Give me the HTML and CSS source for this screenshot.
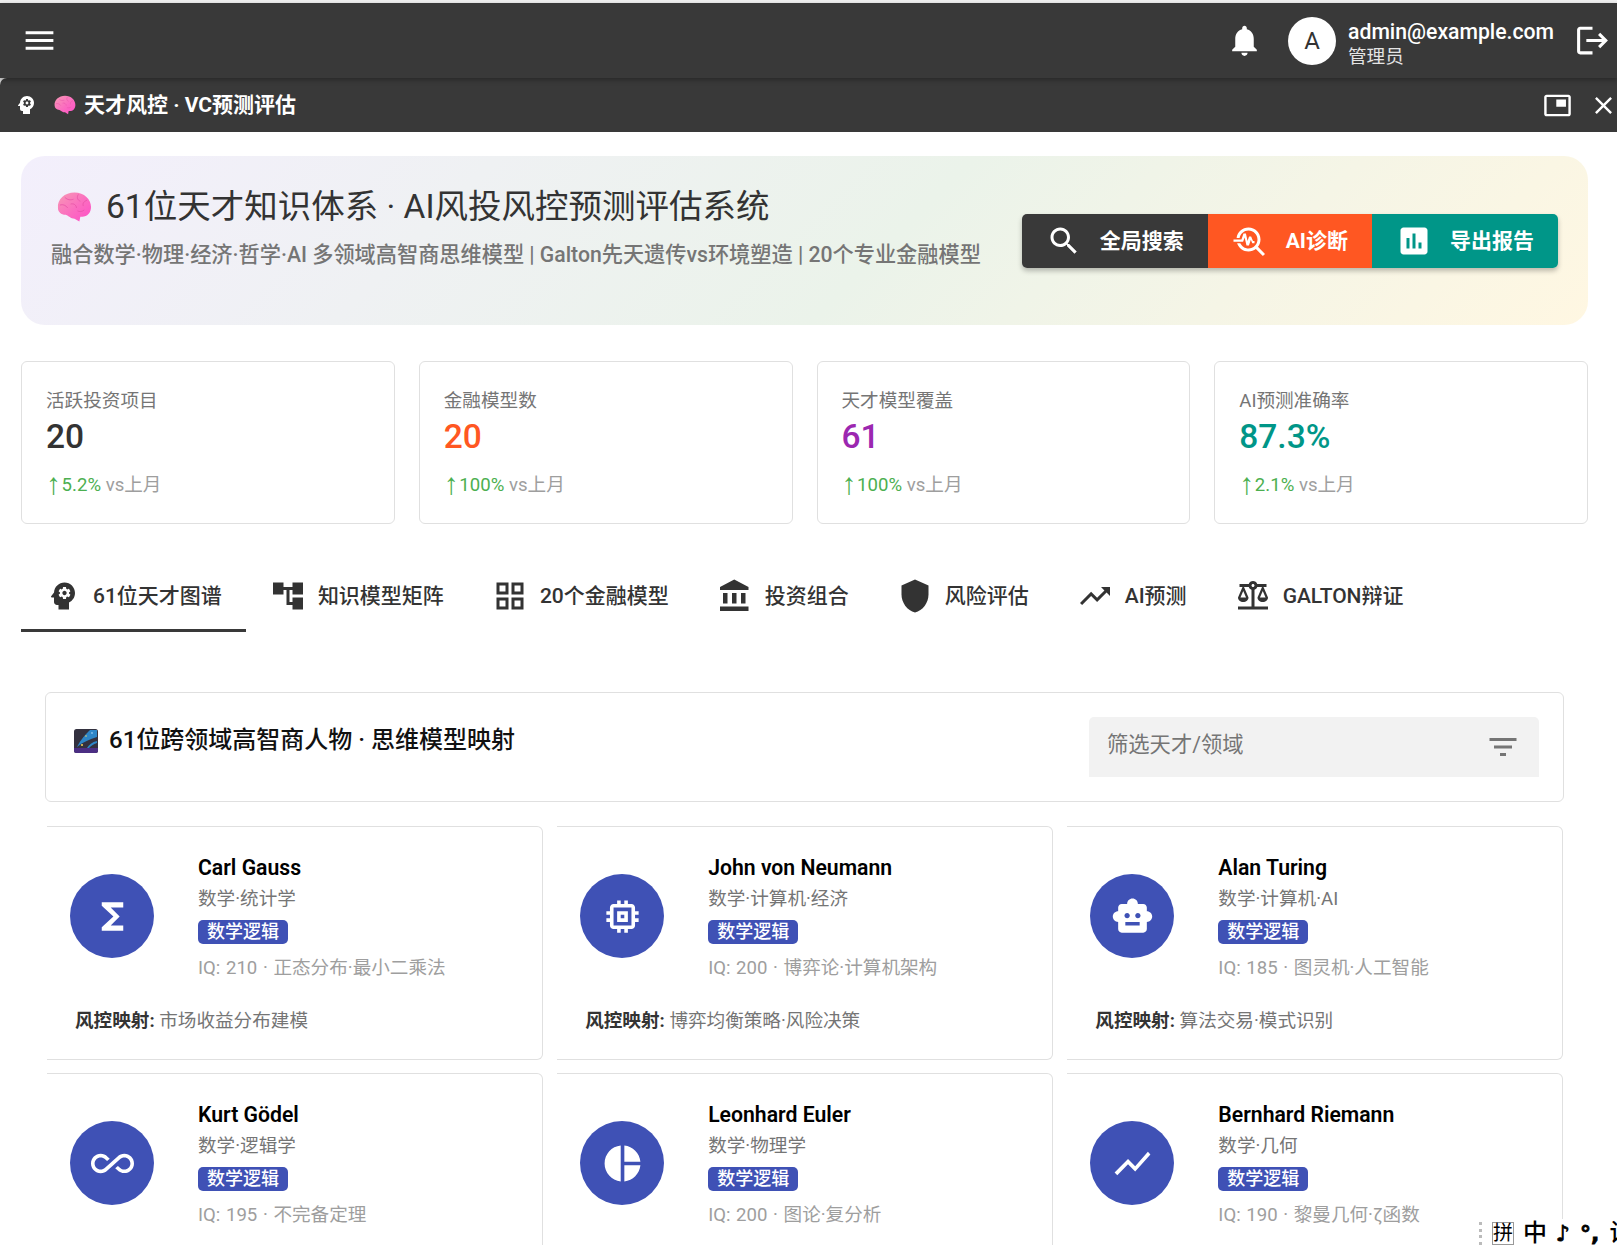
FILE: index.html
```html
<!DOCTYPE html>
<html lang="zh-CN">
<head>
    <meta charset="UTF-8">
    <meta name="viewport" content="width=device-width, initial-scale=1.0">
    <title>天才风控 · VC预测评估</title>
    <link rel="stylesheet" href="styles.css">
</head>
<body>
    <svg class="defs" aria-hidden="true">
        <defs>
            <linearGradient id="brain-fill" x1="0" y1="0" x2="1" y2="1">
                <stop offset="0" stop-color="#f79ab4"/>
                <stop offset=".55" stop-color="#fb6cc0"/>
                <stop offset="1" stop-color="#ff4fc8"/>
            </linearGradient>
        </defs>
        <symbol id="i-brain" viewBox="0 0 36 32">
            <path fill="url(#brain-fill)" d="M1 17C0 8 8 1 18 1c10 0 17 7 17 15 0 6-4 10-9 10h-2l-1 5-5-3c-4 0-6-3-9-4-5 0-8-3-8-7z"/>
            <path fill="none" stroke="#e652a8" stroke-width=".8" d="M8 6c3 3 6 3 9 2M22 3c-2 3-1 6 2 7M31 9c-3 1-5 3-4 6M3 14c3-1 6 0 8 3M14 13c3-1 6 1 6 4M28 19c-2 2-5 2-7 1"/>
        </symbol>
        <symbol id="i-galaxy" viewBox="0 0 24 24">
            <rect x="0" y="0" width="24" height="24" rx="2.5" fill="#33313f"/>
            <path fill="#4b2e83" d="M0 19h24v2.500a2.500 2.500 0 0 1-2.500 2.500h-19A2.500 2.500 0 0 1 0 21.500z"/>
            <path fill="#2d86c8" d="M3 18C7 10 12 5 16 1h7v7c-7 2-14 5-20 10z"/>
            <path fill="#2d86c8" d="M13 19c2-3 5-6 10-7v2c-4 1-6 3-8 5z"/>
            <circle cx="8" cy="16" r="1" fill="#f4d35e"/>
            <circle cx="12" cy="7" r=".8" fill="#f4d35e"/>
            <circle cx="18" cy="4" r=".8" fill="#bfe3ff"/>
        </symbol>
        <symbol id="i-menu" viewBox="0 0 24 24"><path d="M3 18h18v-2H3v2zm0-5h18v-2H3v2zm0-7v2h18V6H3z"/></symbol>
        <symbol id="i-bell" viewBox="0 0 24 24"><path d="M12 22c1.1 0 2-.9 2-2h-4c0 1.1.89 2 2 2zm6-6v-5c0-3.07-1.64-5.64-4.5-6.32V4c0-.83-.67-1.5-1.5-1.5s-1.5.67-1.5 1.5v.68C7.63 5.36 6 7.92 6 11v5l-2 2v1h16v-1l-2-2z"/></symbol>
        <symbol id="i-logout" viewBox="0 0 24 24"><path d="M17 7l-1.41 1.41L18.17 11H8v2h10.17l-2.58 2.58L17 17l5-5zM4 5h8V3H4c-1.1 0-2 .9-2 2v14c0 1.1.9 2 2 2h8v-2H4V5z"/></symbol>
        <symbol id="i-psychology" viewBox="0 0 24 24"><path d="M13 8.57c-.79 0-1.43.64-1.43 1.43s.64 1.43 1.43 1.43 1.43-.64 1.43-1.43-.64-1.43-1.43-1.43z"/><path d="M13 3C9.25 3 6.2 5.94 6.02 9.64L4.1 12.2c-.25.33-.01.8.4.8H6v3c0 1.1.9 2 2 2h1v3h7v-4.68c2.36-1.12 4-3.53 4-6.32 0-3.87-3.13-7-7-7zm3 7c0 .13-.01.26-.02.39l.83.66c.08.06.1.16.05.25l-.8 1.39c-.05.09-.16.12-.24.09l-.99-.4c-.21.16-.43.29-.67.39L14 13.83c-.01.1-.1.17-.2.17h-1.6c-.1 0-.18-.07-.2-.17l-.15-1.06c-.25-.1-.47-.23-.68-.39l-.99.4c-.09.03-.2 0-.25-.09l-.8-1.39c-.05-.08-.03-.19.05-.25l.84-.66c-.01-.13-.02-.26-.02-.39s.02-.27.04-.39l-.85-.66c-.08-.06-.1-.16-.05-.26l.8-1.38c.05-.09.15-.12.24-.09l1 .4c.2-.15.43-.29.67-.39L12 6.17c.02-.1.1-.17.2-.17h1.6c.1 0 .18.07.2.17l.15 1.06c.24.1.46.23.67.39l1-.4c.09-.03.2 0 .24.09l.8 1.38c.05.09.03.2-.05.26l-.85.66c.03.12.04.25.04.39z"/></symbol>
        <symbol id="i-pip" viewBox="0 0 24 24"><path d="M19 7h-8v6h8V7zm2-4H3c-1.1 0-2 .9-2 2v14c0 1.1.9 1.98 2 1.98h18c1.1 0 2-.88 2-1.98V5c0-1.1-.9-2-2-2zm0 16.01H3V4.98h18v14.03z"/></symbol>
        <symbol id="i-close" viewBox="0 0 24 24"><path d="M19 6.41L17.59 5 12 10.59 6.41 5 5 6.41 10.59 12 5 17.59 6.41 19 12 13.41 17.59 19 19 17.59 13.41 12z"/></symbol>
        <symbol id="i-search" viewBox="0 0 24 24"><path d="M15.5 14h-.79l-.28-.27C15.41 12.59 16 11.11 16 9.5 16 5.91 13.09 3 9.5 3S3 5.91 3 9.5 5.91 16 9.5 16c1.61 0 3.09-.59 4.23-1.57l.27.28v.79l5 4.99L20.49 19l-4.99-5zm-6 0C7.01 14 5 11.99 5 9.5S7.01 5 9.5 5 14 7.01 14 9.5 11.99 14 9.5 14z"/></symbol>
        <symbol id="i-troubleshoot" viewBox="0 0 24 24"><path d="M22 20.59l-4.69-4.69C18.37 14.55 19 12.85 19 11c0-4.42-3.58-8-8-8-4.08 0-7.44 3.05-7.93 7h2.02C5.57 7.17 8.03 5 11 5c3.31 0 6 2.69 6 6s-2.69 6-6 6c-2.42 0-4.5-1.44-5.45-3.5H3.4C4.45 16.69 7.46 19 11 19c1.85 0 3.55-.63 4.9-1.69L20.59 22 22 20.59z"/><path d="M8.43 9.69L9.65 15h1.64l1.26-3.78.95 2.28H15V12h-1l-1.25-3h-1.39l-.98 3.03L9.28 7H7.65L6.3 11H1v1.5h6.4z"/></symbol>
        <symbol id="i-assessment" viewBox="0 0 24 24"><path d="M19 3H5c-1.1 0-2 .9-2 2v14c0 1.1.9 2 2 2h14c1.1 0 2-.9 2-2V5c0-1.1-.9-2-2-2zM9 17H7v-7h2v7zm4 0h-2V7h2v10zm4 0h-2v-4h2v4z"/></symbol>
        <symbol id="i-tree" viewBox="0 0 24 24"><path d="M22 11V3h-7v3H9V3H2v8h7V8h2v10h4v3h7v-8h-7v3h-2V8h2v3z"/></symbol>
        <symbol id="i-grid" viewBox="0 0 24 24"><path d="M3 3v8h8V3H3zm6 6H5V5h4v4zm-6 4v8h8v-8H3zm6 6H5v-4h4v4zm4-16v8h8V3h-8zm6 6h-4V5h4v4zm-6 4v8h8v-8h-8zm6 6h-4v-4h4v4z"/></symbol>
        <symbol id="i-bank" viewBox="0 0 24 24"><path d="M4 10v7h3v-7H4zm6 0v7h3v-7h-3zM2 22h19v-3H2v3zm14-12v7h3v-7h-3zm-4.5-9L2 6v2h19V6l-9.5-5z"/></symbol>
        <symbol id="i-shield" viewBox="0 0 24 24"><path d="M12 1L3 5v6c0 5.55 3.84 10.74 9 12 5.16-1.26 9-6.45 9-12V5l-9-4z"/></symbol>
        <symbol id="i-trending" viewBox="0 0 24 24"><path d="M16 6l2.29 2.29-4.88 4.88-4-4L2 16.59 3.41 18l6-6 4 4 6.3-6.29L22 12V6z"/></symbol>
        <symbol id="i-balance" viewBox="0 0 24 24"><path d="M13 7.83c.85-.3 1.53-.98 1.83-1.83H18l-3 7c0 1.66 1.57 3 3.5 3s3.5-1.34 3.5-3l-3-7h2V4h-6.17c-.41-1.17-1.52-2-2.83-2s-2.42.83-2.83 2H3v2h2l-3 7c0 1.66 1.57 3 3.5 3S9 14.66 9 13L6 6h3.17c.3.85.98 1.53 1.83 1.83V19H2v2h20v-2h-9V7.83zM20.37 13h-3.74l1.87-4.36L20.37 13zm-13 0H3.63L5.5 8.64 7.37 13zM12 6c-.55 0-1-.45-1-1 0-.55.45-1 1-1s1 .45 1 1c0 .55-.45 1-1 1z"/></symbol>
        <symbol id="i-filter" viewBox="0 0 24 24"><path d="M10 18h4v-2h-4v2zM3 6v2h18V6H3zm3 7h12v-2H6v2z"/></symbol>
        <symbol id="i-functions" viewBox="0 0 24 24"><path d="M18 4H6v2l6.5 6L6 18v2h12v-3h-7l5-5-5-5h7z"/></symbol>
        <symbol id="i-memory" viewBox="0 0 24 24"><path d="M15 9H9v6h6V9zm-2 4h-2v-2h2v2zm8-2V9h-2V7c0-1.1-.9-2-2-2h-2V3h-2v2h-2V3H9v2H7c-1.1 0-2 .9-2 2v2H3v2h2v2H3v2h2v2c0 1.1.9 2 2 2h2v2h2v-2h2v2h2v-2h2c1.1 0 2-.9 2-2v-2h2v-2h-2v-2h2zm-4 6H7V7h10v10z"/></symbol>
        <symbol id="i-robot" viewBox="0 0 24 24"><path d="M20 9V7c0-1.1-.9-2-2-2h-3c0-1.66-1.34-3-3-3S9 3.34 9 5H6c-1.1 0-2 .9-2 2v2c-1.66 0-3 1.34-3 3s1.34 3 3 3v4c0 1.1.9 2 2 2h12c1.1 0 2-.9 2-2v-4c1.66 0 3-1.34 3-3s-1.34-3-3-3zM7.5 11.5c0-.83.67-1.5 1.5-1.5s1.5.67 1.5 1.5S9.83 13 9 13s-1.5-.67-1.5-1.5zM16 17H8v-2h8v2zm-1-4c-.83 0-1.5-.67-1.5-1.5S14.17 10 15 10s1.5.67 1.5 1.5S15.83 13 15 13z"/></symbol>
        <symbol id="i-infinity" viewBox="0 0 24 24"><path d="M18.6 6.62c-1.44 0-2.8.56-3.77 1.53L12 10.66 10.48 12h.01L7.8 14.39c-.64.64-1.49.99-2.4.99-1.87 0-3.39-1.51-3.39-3.38S3.53 8.62 5.4 8.62c.91 0 1.76.35 2.44 1.03l1.13 1 1.51-1.34L9.22 8.2C8.2 7.18 6.84 6.62 5.4 6.62 2.42 6.62 0 9.04 0 12s2.42 5.38 5.4 5.38c1.44 0 2.8-.56 3.77-1.53l2.83-2.5.01.01L13.52 12h-.01l2.69-2.39c.64-.64 1.49-.99 2.4-.99 1.87 0 3.39 1.51 3.39 3.38s-1.52 3.38-3.39 3.38c-.9 0-1.76-.35-2.44-1.03l-1.14-1.01-1.51 1.34 1.27 1.12c1.02 1.01 2.37 1.57 3.82 1.57 2.98 0 5.4-2.41 5.4-5.38s-2.42-5.37-5.4-5.37z"/></symbol>
        <symbol id="i-pie" viewBox="0 0 24 24"><path d="M11 2v20c-5.07-.5-9-4.79-9-10s3.93-9.5 9-10zm2.03 0v8.99H22c-.47-4.74-4.24-8.52-8.97-8.99zm0 11.01V22c4.74-.47 8.5-4.25 8.97-8.99h-8.97z"/></symbol>
        <symbol id="i-chart" viewBox="0 0 24 24"><path d="M3.5 18.49l6-6.01 4 4L22 6.92l-1.41-1.41-7.09 7.97-4-4L2 16.99z"/></symbol>
    </svg>

    <header class="appbar">
        <svg class="icon icon-bar menu-btn"><use href="#i-menu"/></svg>
        <div class="appbar-right">
            <svg class="icon icon-bar"><use href="#i-bell"/></svg>
            <div class="avatar">A</div>
            <div class="user">
                <div class="user-mail">admin@example.com</div>
                <div class="user-role">管理员</div>
            </div>
            <svg class="icon icon-bar"><use href="#i-logout"/></svg>
        </div>
    </header>

    <div class="tabbar-wrap">
        <div class="tabbar">
            <svg class="icon icon-sm"><use href="#i-psychology"/></svg>
            <svg class="brain-sm"><use href="#i-brain"/></svg>
            <span class="tabbar-title">天才风控 · VC预测评估</span>
            <div class="tabbar-actions">
                <svg class="icon icon-md"><use href="#i-pip"/></svg>
                <svg class="icon icon-md"><use href="#i-close"/></svg>
            </div>
        </div>
    </div>

    <main class="content">
        <section class="hero">
            <div class="hero-text">
                <h1 class="hero-title"><svg class="brain-lg"><use href="#i-brain"/></svg>61位天才知识体系 · AI风投风控预测评估系统</h1>
                <p class="hero-sub">融合数学·物理·经济·哲学·AI 多领域高智商思维模型 | Galton先天遗传vs环境塑造 | 20个专业金融模型</p>
            </div>
            <div class="btn-group">
                <div class="btn btn-dark"><svg class="icon icon-lg"><use href="#i-search"/></svg><span class="btn-label">全局搜索</span></div>
                <div class="btn btn-orange"><svg class="icon icon-lg"><use href="#i-troubleshoot"/></svg><span class="btn-label">AI诊断</span></div>
                <div class="btn btn-teal"><svg class="icon icon-lg"><use href="#i-assessment"/></svg><span class="btn-label">导出报告</span></div>
            </div>
        </section>

        <section class="stats">
            <div class="stat">
                <div class="stat-label">活跃投资项目</div>
                <div class="stat-value">20</div>
                <div class="stat-delta"><span class="up"><span class="arrow">↑</span> 5.2%</span> vs上月</div>
            </div>
            <div class="stat">
                <div class="stat-label">金融模型数</div>
                <div class="stat-value orange">20</div>
                <div class="stat-delta"><span class="up"><span class="arrow">↑</span> 100%</span> vs上月</div>
            </div>
            <div class="stat">
                <div class="stat-label">天才模型覆盖</div>
                <div class="stat-value purple">61</div>
                <div class="stat-delta"><span class="up"><span class="arrow">↑</span> 100%</span> vs上月</div>
            </div>
            <div class="stat">
                <div class="stat-label">AI预测准确率</div>
                <div class="stat-value teal">87.3%</div>
                <div class="stat-delta"><span class="up"><span class="arrow">↑</span> 2.1%</span> vs上月</div>
            </div>
        </section>

        <nav class="tabs">
            <div class="tab active"><svg class="icon icon-lg"><use href="#i-psychology"/></svg><span class="tab-label">61位天才图谱</span></div>
            <div class="tab"><svg class="icon icon-lg"><use href="#i-tree"/></svg><span class="tab-label">知识模型矩阵</span></div>
            <div class="tab"><svg class="icon icon-lg"><use href="#i-grid"/></svg><span class="tab-label">20个金融模型</span></div>
            <div class="tab"><svg class="icon icon-lg"><use href="#i-bank"/></svg><span class="tab-label">投资组合</span></div>
            <div class="tab"><svg class="icon icon-lg"><use href="#i-shield"/></svg><span class="tab-label">风险评估</span></div>
            <div class="tab"><svg class="icon icon-lg"><use href="#i-trending"/></svg><span class="tab-label">AI预测</span></div>
            <div class="tab"><svg class="icon icon-lg"><use href="#i-balance"/></svg><span class="tab-label">GALTON辩证</span></div>
        </nav>

        <section class="panel">
            <div class="filter-card">
                <h2 class="filter-title"><svg class="galaxy"><use href="#i-galaxy"/></svg>61位跨领域高智商人物 · 思维模型映射</h2>
                <div class="filter-input"><span class="filter-text">筛选天才/领域</span><svg class="icon icon-lg"><use href="#i-filter"/></svg></div>
            </div>

            <div class="genius-grid">
                <article class="genius">
                    <div class="genius-top">
                        <div class="circle"><svg class="icon icon-circle"><use href="#i-functions"/></svg></div>
                        <div class="genius-info">
                            <div class="name">Carl Gauss</div>
                            <div class="role">数学·统计学</div>
                            <span class="chip">数学逻辑</span>
                            <div class="iq">IQ: 210 · 正态分布·最小二乘法</div>
                        </div>
                    </div>
                    <div class="risk"><strong>风控映射:</strong> 市场收益分布建模</div>
                </article>
                <article class="genius">
                    <div class="genius-top">
                        <div class="circle"><svg class="icon icon-circle"><use href="#i-memory"/></svg></div>
                        <div class="genius-info">
                            <div class="name">John von Neumann</div>
                            <div class="role">数学·计算机·经济</div>
                            <span class="chip">数学逻辑</span>
                            <div class="iq">IQ: 200 · 博弈论·计算机架构</div>
                        </div>
                    </div>
                    <div class="risk"><strong>风控映射:</strong> 博弈均衡策略·风险决策</div>
                </article>
                <article class="genius">
                    <div class="genius-top">
                        <div class="circle"><svg class="icon icon-circle"><use href="#i-robot"/></svg></div>
                        <div class="genius-info">
                            <div class="name">Alan Turing</div>
                            <div class="role">数学·计算机·AI</div>
                            <span class="chip">数学逻辑</span>
                            <div class="iq">IQ: 185 · 图灵机·人工智能</div>
                        </div>
                    </div>
                    <div class="risk"><strong>风控映射:</strong> 算法交易·模式识别</div>
                </article>
                <article class="genius">
                    <div class="genius-top">
                        <div class="circle"><svg class="icon icon-circle"><use href="#i-infinity"/></svg></div>
                        <div class="genius-info">
                            <div class="name">Kurt Gödel</div>
                            <div class="role">数学·逻辑学</div>
                            <span class="chip">数学逻辑</span>
                            <div class="iq">IQ: 195 · 不完备定理</div>
                        </div>
                    </div>
                </article>
                <article class="genius">
                    <div class="genius-top">
                        <div class="circle"><svg class="icon icon-circle"><use href="#i-pie"/></svg></div>
                        <div class="genius-info">
                            <div class="name">Leonhard Euler</div>
                            <div class="role">数学·物理学</div>
                            <span class="chip">数学逻辑</span>
                            <div class="iq">IQ: 200 · 图论·复分析</div>
                        </div>
                    </div>
                </article>
                <article class="genius">
                    <div class="genius-top">
                        <div class="circle"><svg class="icon icon-circle"><use href="#i-chart"/></svg></div>
                        <div class="genius-info">
                            <div class="name">Bernhard Riemann</div>
                            <div class="role">数学·几何</div>
                            <span class="chip">数学逻辑</span>
                            <div class="iq">IQ: 190 · 黎曼几何·ζ函数</div>
                        </div>
                    </div>
                </article>
            </div>
        </section>
    </main>

    <div class="ime">
        <span class="ime-grip"></span>
        <span class="ime-box">拼</span>
        <span class="ime-cn">中</span>
        <span class="ime-sym">♪</span>
        <span class="ime-sym">°,</span>
        <span class="ime-cn">设</span>
    </div>
</body>
</html>
```

FILE: styles.css
```css
* { box-sizing: border-box; }
html, body {
    height: 1245px;
    overflow: hidden;
}
body {
    margin: 0;
    padding-top: 3px;
    background: #fff;
    font-family: Roboto, "Noto Sans CJK SC", sans-serif;
    color: #333;
    position: relative;
}
body::before {
    content: "";
    position: absolute;
    top: 0;
    left: 0;
    right: 0;
    height: 3px;
    background: #f0f0f0;
}
.defs {
    position: absolute;
    width: 0;
    height: 0;
}

/* icons */
.icon { fill: currentColor; flex: none; display: block; }
.icon-sm { width: 24px; height: 24px; }
.icon-md { width: 29px; height: 29px; }
.icon-lg { width: 36px; height: 36px; }
.icon-bar { width: 37px; height: 37px; }
.icon-circle { width: 43px; height: 43px; }

/* app bar */
.appbar {
    height: 75px;
    background: #393939;
    color: #fff;
    display: flex;
    align-items: center;
    justify-content: space-between;
    padding: 0 6px 0 21px;
    position: relative;
    z-index: 2;
    box-shadow: 0 2px 5px rgba(0,0,0,0.3);
}
.appbar-right {
    display: flex;
    align-items: center;
}
.avatar {
    width: 48px;
    height: 48px;
    border-radius: 50%;
    background: #fff;
    color: #333;
    font-size: 24px;
    display: flex;
    align-items: center;
    justify-content: center;
    margin: 0 12px 0 25px;
}
.user { margin-right: 20px; padding-top: 7px; }
.user-mail {
    font-size: 21.2px;
    font-weight: 500;
    line-height: 26px;
}
.user-role {
    font-size: 18.6px;
    line-height: 24px;
    color: #e4e4e4;
}

/* window tab */
.tabbar-wrap { background: #d8d8d8; }
.tabbar {
    height: 54px;
    background: #393939;
    border-top-left-radius: 7px;
    color: #fff;
    display: flex;
    align-items: center;
    padding: 0 0 0 14px;
}
.brain-sm { width: 22px; height: 20px; margin: 0 8px 0 16px; flex: none; }
.tabbar-title { font-size: 21px; font-weight: 700; margin-bottom: 4px; }
.tabbar-actions {
    margin-left: auto;
    display: flex;
    align-items: center;
    gap: 17px;
    margin-right: -0.5px;
}

/* main */
.content { padding: 24px 29px 0 21px; }

.hero {
    height: 169px;
    border-radius: 24px;
    background: linear-gradient(135deg, #f3effc 0%, #ebf3ea 55%, #fff7e2 100%);
    display: flex;
    align-items: center;
    justify-content: space-between;
    padding: 0 30px;
}
.hero-text { align-self: flex-start; padding-top: 29px; }
.hero-title {
    margin: 0;
    font-size: 33.5px;
    font-weight: 400;
    line-height: 44px;
    color: #333;
    display: flex;
    align-items: center;
    padding-left: 6px;
}
.brain-lg { width: 35px; height: 32px; margin-right: 14px; flex: none; }
.hero-sub {
    margin: 12px 0 0;
    font-size: 21.2px;
    font-weight: 500;
    line-height: 28px;
    color: #757575;
    white-space: nowrap;
}
.btn-group {
    display: flex;
    border-radius: 5px;
    overflow: hidden;
    box-shadow: 0 3px 5px rgba(0,0,0,0.25);
    flex: none;
}
.btn {
    height: 54px;
    padding: 0 24px;
    display: flex;
    align-items: center;
    gap: 18px;
    color: #fff;
    font-size: 21px;
    font-weight: 700;
}
.btn-label { margin-bottom: 4px; }
.btn-dark { background: #393939; }
.btn-orange { background: #ff5722; }
.btn-teal { background: #009688; }

/* stats */
.stats {
    margin-top: 36px;
    display: grid;
    grid-template-columns: repeat(4, 1fr);
    gap: 24px;
}
.stat {
    height: 163px;
    border: 1px solid #e0e0e0;
    border-radius: 6px;
    padding: 25px 24px 0;
}
.stat-label {
    font-size: 18.6px;
    line-height: 28px;
    color: #757575;
}
.stat-value {
    font-size: 33.5px;
    font-weight: 500;
    line-height: 44px;
    color: #333;
}
.orange { color: #ff5722; }
.purple { color: #9c27b0; }
.teal { color: #009688; }
.stat-delta {
    margin-top: 13px;
    font-size: 18.6px;
    line-height: 26px;
    color: #9e9e9e;
}
.up { color: #4caf50; }
.arrow {
    display: inline-block;
    width: 11px;
    font-family: "Liberation Sans", sans-serif;
    font-size: 30px;
    line-height: 0;
    vertical-align: -3px;
}

/* tabs */
.tabs {
    margin-top: 36px;
    display: flex;
    height: 72px;
}
.tab {
    display: flex;
    align-items: center;
    gap: 12px;
    padding: 0 24px;
    font-size: 21px;
    font-weight: 500;
    color: #333;
}
.tab-label { margin-bottom: 4px; }
.tab.active { border-bottom: 3px solid #393939; padding-top: 3px; }

/* panel */
.panel { padding: 60px 24px 0; }
.filter-card {
    height: 110px;
    border: 1px solid #e0e0e0;
    border-radius: 6px;
    display: flex;
    justify-content: space-between;
    padding: 24px 24px 24px 28px;
}
.filter-title {
    margin: 0;
    font-size: 24px;
    font-weight: 500;
    line-height: 47px;
    color: #111;
    display: flex;
    align-items: center;
    align-self: flex-start;
}
.galaxy { width: 24px; height: 24px; margin-right: 11px; flex: none; }
.filter-input {
    width: 450px;
    height: 60px;
    background: #f2f2f2;
    border-radius: 5px 5px 0 0;
    display: flex;
    align-items: center;
    justify-content: space-between;
    padding: 0 18px;
    font-size: 21.3px;
    color: #757575;
}
.filter-text { margin-bottom: 9px; }

/* genius cards */
.genius-grid {
    margin-top: 24px;
    padding: 0 1px 0 2px;
    display: grid;
    grid-template-columns: repeat(3, 1fr);
    column-gap: 14.5px;
    row-gap: 13px;
}
.genius {
    height: 234px;
    border: 1px solid #e0e0e0;
    border-left: 0;
    border-radius: 0 6px 6px 0;
    padding: 26px 0 0 23px;
}
.genius-top { display: flex; align-items: flex-start; }
.circle {
    width: 84px;
    height: 84px;
    border-radius: 50%;
    background: #3f51b5;
    color: #fff;
    display: flex;
    align-items: center;
    justify-content: center;
    margin: 21px 44px 0 0;
    flex: none;
}
.genius-info { display: flex; flex-direction: column; align-items: flex-start; }
.name {
    font-size: 21.2px;
    font-weight: 600;
    line-height: 30px;
    color: #000;
}
.role {
    margin-top: 1px;
    font-size: 18.6px;
    line-height: 30px;
    color: #757575;
}
.chip {
    margin-top: 6px;
    height: 24px;
    line-height: 24px;
    padding: 0 9px;
    border-radius: 5px;
    background: #3f51b5;
    color: #fff;
    font-size: 18px;
    font-weight: 500;
}
.iq {
    margin-top: 9px;
    font-size: 18.6px;
    word-spacing: 1px;
    line-height: 30px;
    color: #9e9e9e;
}
.risk {
    margin: 23px 0 0 5px;
    font-size: 18.6px;
    line-height: 30px;
    color: #757575;
}
.risk strong { color: #333; font-weight: 700; }

/* input method toolbar sitting over the page */
.ime {
    position: absolute;
    right: 0;
    bottom: 0;
    width: 139px;
    height: 26px;
    background: #fff;
    display: flex;
    align-items: flex-start;
    white-space: nowrap;
    overflow: hidden;
    padding-top: 3px;
    color: #000;
    font-size: 24px;
    line-height: 23px;
}
.ime-grip {
    width: 3px;
    height: 23px;
    margin: 0 10px 0 1px;
    border-left: 3px dotted #bbb;
}
.ime-box {
    width: 24px;
    height: 23px;
    border: 1px solid #999;
    font-size: 20px;
    line-height: 21px;
    text-align: center;
    margin-right: 9px;
}
.ime-cn { font-weight: 500; margin-right: 9px; }
.ime-sym {
    width: 20px;
    margin-right: 10px;
    font-family: "DejaVu Sans", sans-serif;
    font-size: 22px;
    font-weight: 700;
    -webkit-text-stroke: 0.8px #000;
}
```
